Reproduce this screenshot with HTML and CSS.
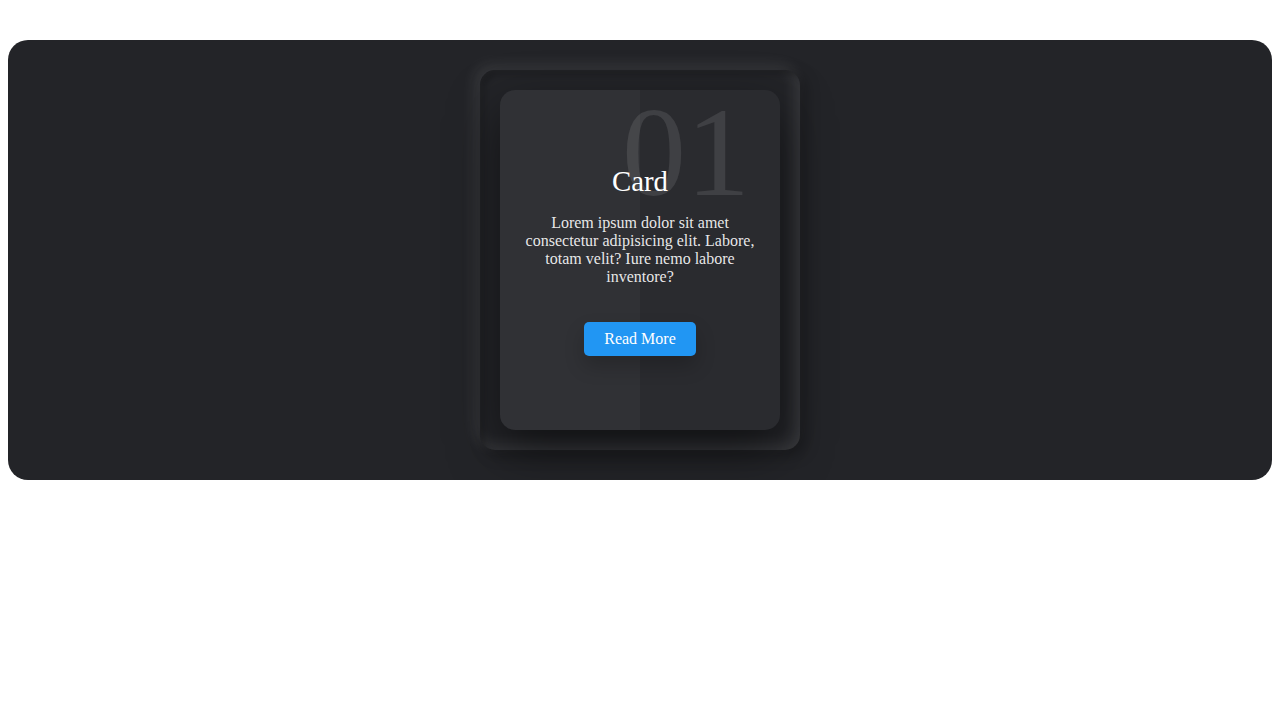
FILE: index.html
```html
<!DOCTYPE html>
<html lang="en">
<head>
<meta charset="utf-8">
<title>Card</title>
<link rel="stylesheet" href="styles.css">
</head>
<body>
<div class="container">
  <div class="card">
    <div class="box">
      <div class="content">
        <h2 class="num">01</h2>
        <h3 class="title">Card</h3>
        <p class="text">Lorem ipsum dolor sit amet consectetur adipisicing elit. Labore, totam velit? Iure nemo labore inventore?</p>
        <a class="btn" href="#">Read More</a>
      </div>
    </div>
  </div>
</div>
</body>
</html>
```
FILE: styles.css
```css
html, body {
  margin: 0;
  background: #ffffff;
}
body {
  padding: 40px 8px 8px;
  font-family: "Liberation Serif", "Times New Roman", serif;
}
.container {
  background: #232428;
  border-radius: 20px;
  padding: 30px;
  display: flex;
  justify-content: center;
  overflow: hidden;
}
.card {
  position: relative;
  width: 320px;
  height: 380px;
  border-radius: 15px;
  box-shadow: inset 5px 5px 5px rgba(0,0,0,0.2),
              inset -5px -5px 15px rgba(255,255,255,0.1),
              5px 5px 15px rgba(0,0,0,0.3),
              -5px -5px 15px rgba(255,255,255,0.1);
  padding: 20px;
  box-sizing: border-box;
}
.box {
  position: relative;
  height: 100%;
  background: #2a2b2f;
  border-radius: 15px;
  box-shadow: 0 20px 50px rgba(0,0,0,0.5);
  display: flex;
  justify-content: center;
  align-items: center;
}
.box::before {
  content: "";
  position: absolute;
  top: 0;
  left: 0;
  width: 50%;
  height: 100%;
  border-radius: 15px 0 0 15px;
  background: rgba(255,255,255,0.03);
  pointer-events: none;
}
.content {
  padding: 0 20px;
  text-align: center;
}
.num {
  position: absolute;
  top: -11px;
  right: 30px;
  margin: 0;
  font-size: 128px;
  font-weight: normal;
  line-height: normal;
  color: rgba(255,255,255,0.1);
}
.title {
  position: relative;
  margin: 0;
  font-size: 28.8px;
  font-weight: normal;
  color: #ffffff;
}
.text {
  position: relative;
  margin: 16px 0;
  font-size: 16px;
  color: rgba(255,255,255,0.9);
}
.btn {
  position: relative;
  display: inline-block;
  margin-top: 20px;
  padding: 8px 20px;
  background: #2196f3;
  border-radius: 5px;
  color: #ffffff;
  text-decoration: none;
  font-size: 16px;
  box-shadow: 0 10px 20px rgba(0,0,0,0.2);
}
```
